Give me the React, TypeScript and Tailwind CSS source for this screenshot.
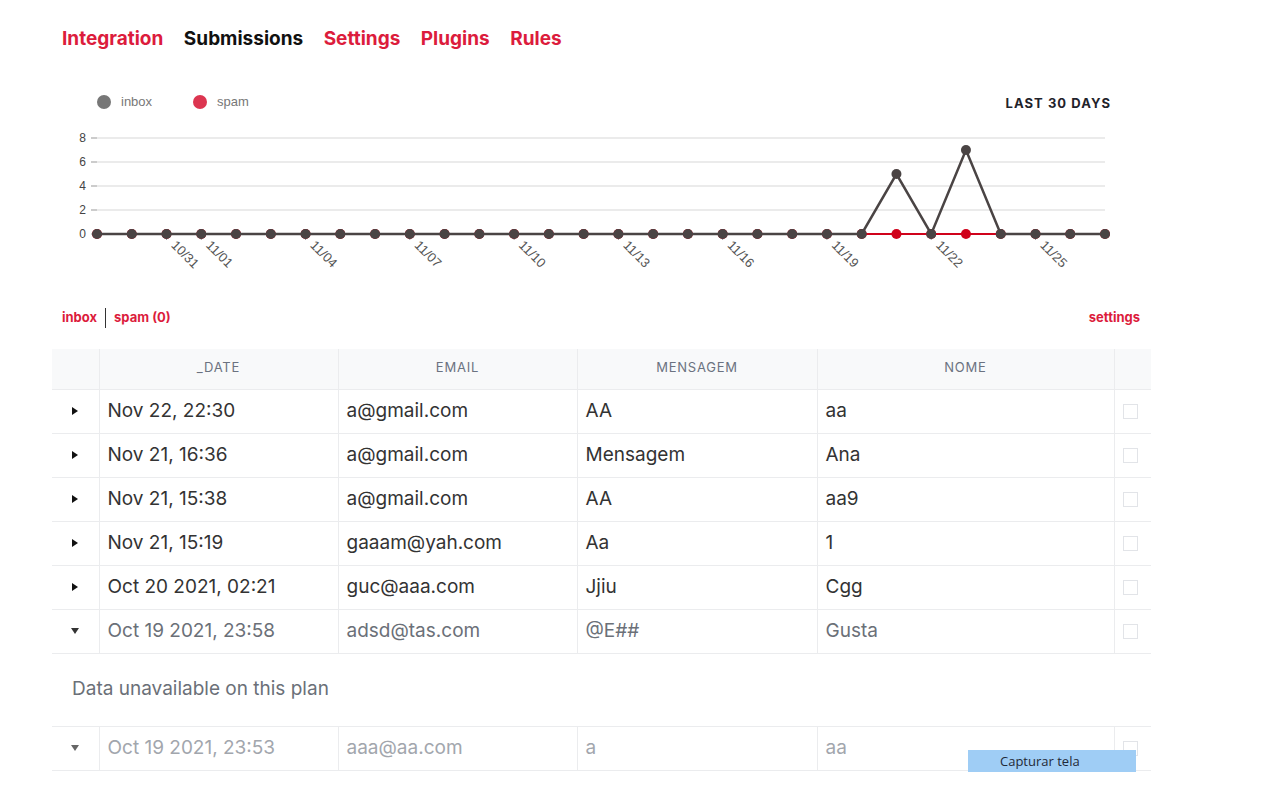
import React from 'react';

const INBOX = [0, 0, 0, 0, 0, 0, 0, 0, 0, 0, 0, 0, 0, 0, 0, 0, 0, 0, 0, 0, 0, 0, 0, 5, 0, 7, 0, 0, 0, 0];
const LABELS: Record<number, string> = {
  2: '10/31', 3: '11/01', 6: '11/04', 9: '11/07', 12: '11/10', 15: '11/13', 18: '11/16', 21: '11/19', 24: '11/22', 27: '11/25',
};

const X0 = 97;
const X1 = 1105;
const Y0 = 234;
const step = (X1 - X0) / 29;
const px = (i: number) => X0 + i * step;
const py = (v: number) => Y0 - v * 12;

type Row = { date: string; email: string; msg: string; name: string; open?: boolean; tone: 'dark' | 'mid' | 'light' };

const rows: Row[] = [
  { date: 'Nov 22, 22:30', email: 'a@gmail.com', msg: 'AA', name: 'aa', tone: 'dark' },
  { date: 'Nov 21, 16:36', email: 'a@gmail.com', msg: 'Mensagem', name: 'Ana', tone: 'dark' },
  { date: 'Nov 21, 15:38', email: 'a@gmail.com', msg: 'AA', name: 'aa9', tone: 'dark' },
  { date: 'Nov 21, 15:19', email: 'gaaam@yah.com', msg: 'Aa', name: '1', tone: 'dark' },
  { date: 'Oct 20 2021, 02:21', email: 'guc@aaa.com', msg: 'Jjiu', name: 'Cgg', tone: 'dark' },
  { date: 'Oct 19 2021, 23:58', email: 'adsd@tas.com', msg: '@E##', name: 'Gusta', open: true, tone: 'mid' },
  { date: 'Oct 19 2021, 23:53', email: 'aaa@aa.com', msg: 'a', name: 'aa', open: true, tone: 'light' },
];

const toneText = { dark: 'text-[#333333]', mid: 'text-[#6b7078]', light: 'text-[#a2a6ad]' };
const toneIcon = { dark: '#111', mid: '#333', light: '#666' };

const Chart: React.FC = () => {
  const inboxPts = INBOX.map((v, i) => `${px(i)},${py(v)}`).join(' ');
  const spamPts = INBOX.map((_, i) => `${px(i)},${py(0)}`).join(' ');
  return (
    <svg width={1100} height={160} viewBox="52 125 1100 160" className="block" style={{ fontFamily: '"Liberation Sans", Arial, sans-serif' }}>
      {[0, 2, 4, 6, 8].map((v) => (
        <g key={v}>
          <line x1={X0} x2={X1} y1={py(v)} y2={py(v)} stroke="#e4e4e4" strokeWidth={1.5} />
          <line x1={91} x2={97} y1={py(v)} y2={py(v)} stroke="#999" strokeWidth={1} />
          <text x={86} y={py(v) + 4} textAnchor="end" fontSize={12} fill="#444">{v}</text>
        </g>
      ))}
      {Object.entries(LABELS).map(([k, label]) => {
        const x = px(Number(k));
        return (
          <g key={k}>
            <line x1={x} x2={x} y1={Y0} y2={Y0 + 6} stroke="#999" strokeWidth={1} />
            <text transform={`translate(${x + 4},${Y0 + 12}) rotate(45)`} fontSize={13} fill="#555">{label}</text>
          </g>
        );
      })}
      <polyline points={spamPts} fill="none" stroke="#d0021b" strokeWidth={2} />
      {INBOX.map((_, i) => (
        <circle key={`s${i}`} cx={px(i)} cy={py(0)} r={5} fill="#d0021b" />
      ))}
      <polyline points={inboxPts} fill="none" stroke="#4a4444" strokeWidth={2.5} />
      {INBOX.map((v, i) => (i !== 23 && i !== 25) ? (
        <circle key={`i${i}`} cx={px(i)} cy={py(v)} r={5} fill="#4a4444" />
      ) : null)}
      {[23, 25].map((i) => (
        <circle key={`t${i}`} cx={px(i)} cy={py(INBOX[i])} r={5} fill="#4a4444" />
      ))}
    </svg>
  );
};

const Triangle: React.FC<{ open?: boolean; color: string }> = ({ open, color }) => (
  <svg width="10" height="10" viewBox="0 0 10 10" className="mx-auto block">
    {open ? <polygon points="1,2 9,2 5,8" fill={color} /> : <polygon points="2,1 8,5 2,9" fill={color} />}
  </svg>
);

const Checkbox: React.FC = () => (
  <div className="ml-[8px] h-[15px] w-[15px] border border-[#e2e4e8] bg-white" />
);

export default function App() {
  return (
    <div className="relative min-h-[788px] bg-white" style={{ fontFamily: 'Inter, "Noto Sans", sans-serif' }}>
      <div className="w-[1099px] ml-[52px]">
        {/* Nav */}
        <nav className="flex gap-[20.5px] pl-[10px] pt-[26px] text-[19px] font-bold leading-[26px]">
          <span className="text-[#dc1c3c]">Integration</span>
          <span className="text-[#111]">Submissions</span>
          <span className="text-[#dc1c3c]">Settings</span>
          <span className="text-[#dc1c3c]">Plugins</span>
          <span className="text-[#dc1c3c]">Rules</span>
        </nav>

        {/* Chart header */}
        <div className="mt-[39px] mb-[12px] flex items-center justify-between pl-[45px] pr-[40px] h-[22px]">
          <div className="flex items-center text-[13px] text-[#777]" style={{ fontFamily: '"Liberation Sans", Arial, sans-serif' }}>
            <span className="h-[14px] w-[14px] rounded-full bg-[#777]" />
            <span className="ml-[10px]">inbox</span>
            <span className="ml-[41px] h-[14px] w-[14px] rounded-full bg-[#dc3550]" />
            <span className="ml-[10px]">spam</span>
          </div>
          <div className="text-[13px] font-bold tracking-[0.08em] text-[#1f232b] translate-y-[2px]">LAST 30 DAYS</div>
        </div>

        <Chart />

        {/* Tabs */}
        <div className="mt-[23px] flex items-center justify-between pl-[10px] pr-[11px] text-[13px] font-bold text-[#dc1c3c] h-[20px]">
          <div className="flex items-center">
            <span>inbox</span>
            <span className="mx-[8px] h-[20px] w-px bg-[#333]" />
            <span>spam (0)</span>
          </div>
          <span>settings</span>
        </div>

        {/* Table */}
        <table className="mt-[21px] w-[1099px] table-fixed border-collapse">
          <colgroup>
            <col className="w-[47px]" />
            <col className="w-[239px]" />
            <col className="w-[239px]" />
            <col className="w-[240px]" />
            <col className="w-[297px]" />
            <col className="w-[37px]" />
          </colgroup>
          <thead>
            <tr className="h-[40px] bg-[#f8f9fa] text-[13px] font-normal tracking-[0.06em] text-[#6b7280]">
              <th className="border-b border-[#ebecee] pb-[2px]" />
              <th className="border-l border-b border-[#ebecee] pb-[2px] font-normal">_DATE</th>
              <th className="border-l border-b border-[#ebecee] pb-[2px] font-normal">EMAIL</th>
              <th className="border-l border-b border-[#ebecee] pb-[2px] font-normal">MENSAGEM</th>
              <th className="border-l border-b border-[#ebecee] pb-[2px] font-normal">NOME</th>
              <th className="border-l border-b border-[#ebecee] pb-[2px]" />
            </tr>
          </thead>
          <tbody>
            {rows.map((r, i) => (
              <React.Fragment key={i}>
                <tr className={`h-[44px] text-[19px] ${toneText[r.tone]}`}>
                  <td className="border-b border-[#ebecee]"><Triangle open={r.open} color={toneIcon[r.tone]} /></td>
                  <td className="border-l border-b border-[#ebecee] pl-[8px]">{r.date}</td>
                  <td className="border-l border-b border-[#ebecee] pl-[8px]">{r.email}</td>
                  <td className="border-l border-b border-[#ebecee] pl-[8px]">{r.msg}</td>
                  <td className="border-l border-b border-[#ebecee] pl-[8px]">{r.name}</td>
                  <td className="border-l border-b border-[#ebecee]"><Checkbox /></td>
                </tr>
                {i === 5 && (
                  <tr className="h-[73px]">
                    <td colSpan={6} className="border-b border-[#ebecee] pl-[20px] text-[19px] text-[#6b7078]">
                      Data unavailable on this plan
                    </td>
                  </tr>
                )}
              </React.Fragment>
            ))}
          </tbody>
        </table>
      </div>

      {/* screen capture overlay */}
      <div
        className="absolute left-[968px] top-[750px] h-[22px] w-[168px] bg-[#9fcdf5] pl-[32px] text-[13px] leading-[22px] text-[#1f2937]"
        style={{ fontFamily: '"Open Sans", "Noto Sans", sans-serif' }}
      >
        Capturar tela
      </div>
    </div>
  );
}
